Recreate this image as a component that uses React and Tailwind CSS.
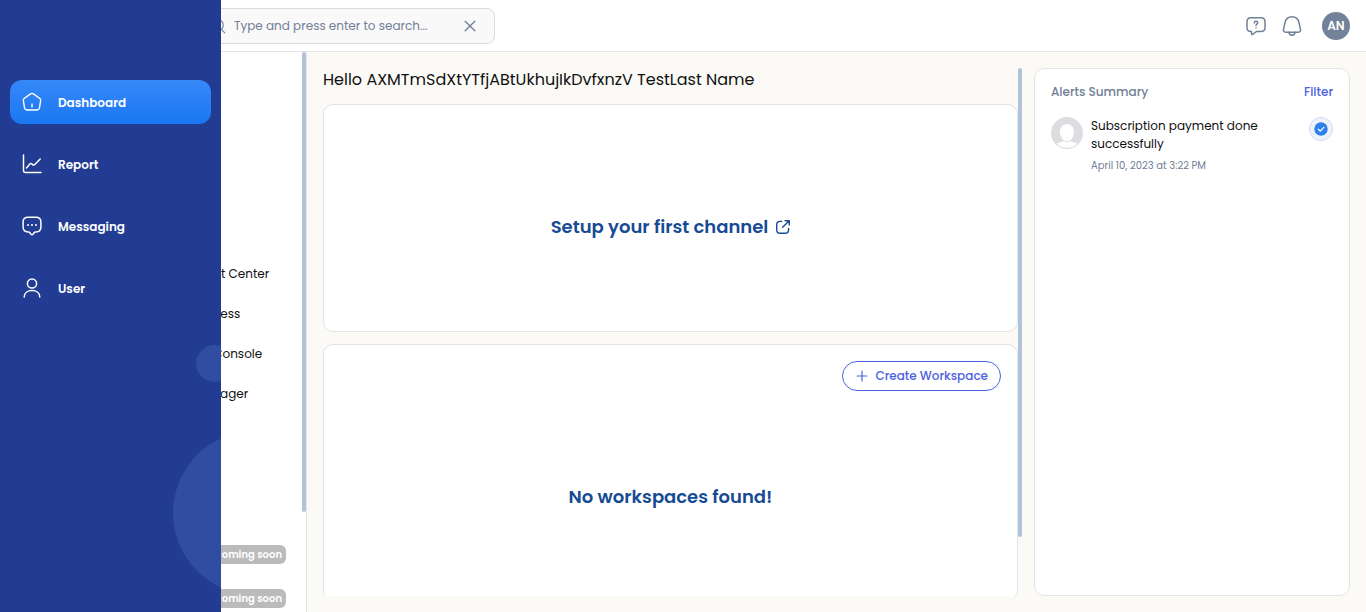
const NAV = [
  { label: "Dashboard", icon: HomeIcon, active: true },
  { label: "Report", icon: ReportIcon },
  { label: "Messaging", icon: MessageIcon },
  { label: "User", icon: UserIcon },
];

const LINKS = ["Merchant Center", "My Business", "Search Console", "Tag Manager"];

function Icon({ className, children, width = 1.5 }) {
  return (
    <svg
      viewBox="0 0 20 20"
      fill="none"
      stroke="currentColor"
      strokeWidth={width}
      strokeLinecap="round"
      strokeLinejoin="round"
      className={className}
      aria-hidden="true"
    >
      {children}
    </svg>
  );
}

function HomeIcon() {
  return (
    <Icon className="size-5 shrink-0" width={1.4}>
      <path d="M8.600 1.900 2.400 6.300C1.500 7 1.200 7.600 1.350 8.600L2.450 15.500C2.700 17.200 3.700 18 5.400 18H14.600C16.300 18 17.300 17.200 17.550 15.500L18.650 8.600C18.800 7.600 18.500 7 17.600 6.300L11.400 1.900C10.500 1.250 9.500 1.250 8.600 1.900Z" />
      <path d="M10 11.500v4" strokeLinecap="butt" />
    </Icon>
  );
}

function ReportIcon() {
  return (
    <Icon className="size-5 shrink-0">
      <path d="M1.500 1v15.500c0 1.400.800 2 2 2H19" />
      <path d="m4.500 14 3.300-3.900c.6-.7 1.500-.8 2.200-.1l.6.600c.7.700 1.600.6 2.200-.1L18.200 5" />
    </Icon>
  );
}

function MessageIcon() {
  return (
    <Icon className="size-5 shrink-0">
      <path d="M6 1.200h8c3.200 0 4.900 1.700 4.900 4.800v5c0 3.200-1.700 4.900-4.900 4.900h-.5c-.5 0-.9.200-1.200.6L11 18.200c-.6.700-1.400.7-2 0l-1.300-1.700c-.3-.4-.7-.6-1.200-.6H6c-3.200 0-4.900-1.700-4.900-4.900V6c0-3.100 1.700-4.800 4.900-4.800Z" />
      <path d="M6 9h.01M10 9h.01M14 9h.01" strokeWidth="2" />
    </Icon>
  );
}

function UserIcon() {
  return (
    <Icon className="size-5 shrink-0">
      <circle cx="10" cy="5.500" r="4.600" />
      <path d="M2.200 19c0-4 3.400-6.500 7.800-6.500s7.800 2.500 7.800 6.500" />
    </Icon>
  );
}

function Sidebar() {
  return (
    <aside className="absolute inset-y-0 left-0 z-10 w-[221px] overflow-hidden bg-[#223b93] px-2.5 pt-20">
      <span className="absolute top-[345px] left-[196px] size-[37px] rounded-full bg-[#314da2]" />
      <span className="absolute top-[431px] left-[173px] size-[164px] rounded-full bg-[#314da2]" />
      <nav className="relative flex flex-col gap-[18px]">
        {NAV.map(({ label, icon: Glyph, active }) => (
          <a
            key={label}
            href="#"
            className={
              active
                ? "flex h-11 items-center gap-4 rounded-xl bg-linear-to-b from-[#3688f8] to-[#1877f2] px-3 text-xs font-semibold text-white"
                : "flex h-11 items-center gap-4 rounded-xl px-3 text-xs font-semibold text-white"
            }
          >
            <Glyph />
            <span className="pt-0.5">{label}</span>
          </a>
        ))}
      </nav>
    </aside>
  );
}

function Header() {
  return (
    <header className="flex h-[52px] shrink-0 items-center justify-between border-b border-[#e2e4e6] bg-white pr-4 pl-[197px] text-[#718096]">
      <label className="flex h-9 w-[298px] items-center rounded-lg border border-[#d9dadb] bg-[#f9f9f9] pr-4 pl-3">
        <Icon className="size-4 shrink-0" width={1.4}>
          <circle cx="9" cy="9" r="7.500" />
          <path d="m14.500 14.500 4 4" />
        </Icon>
        <input
          type="text"
          aria-label="Search"
          placeholder="Type and press enter to search..."
          className="ml-2 min-w-0 flex-1 bg-transparent text-xs outline-none placeholder:text-[#718096]"
        />
        <button type="button" aria-label="Clear search" className="flex size-4 items-center justify-center">
          <Icon className="size-4" width={1.700}>
            <path d="m4 4 12 12M16 4 4 16" />
          </Icon>
        </button>
      </label>
      <div className="flex items-center gap-4">
        <button type="button" aria-label="Help">
          <Icon className="size-5">
            <path d="M5 1.800h10c2.500 0 4 1.500 4 4v5.700c0 2.500-1.500 4-4 4h-4.500L6.700 18.400c-.6.400-1.200.1-1.200-.6v-2.300H5c-2.500 0-4-1.500-4-4V5.800c0-2.500 1.500-4 4-4Z" />
            <path d="M8.300 7c0-1 .7-1.700 1.700-1.700s1.700.7 1.700 1.600c0 1.300-1.700 1.300-1.700 2.600M10 11.700v.1" />
          </Icon>
        </button>
        <button type="button" aria-label="Notifications">
          <Icon className="size-5">
            <path d="M10 .8C6 .8 3.600 3.300 2.900 7L1.500 13.300c-.4 1.700.4 2.900 2.100 2.900h12.800c1.700 0 2.500-1.200 2.100-2.900L17.100 7C16.400 3.300 14 .8 10 .8Z" />
            <path d="M6.800 16.200c.3 1.900 1.500 3 3.200 3s2.900-1.100 3.200-3" />
          </Icon>
        </button>
        <button type="button" className="ml-1 size-7 rounded-full bg-[#718299] text-xs font-semibold text-white">
          AN
        </button>
      </div>
    </header>
  );
}

function Menu() {
  return (
    <div className="flex w-[307px] shrink-0 border-r border-[#e2e4e6] bg-white">
      <div className="flex min-w-0 flex-1 flex-col pt-[202px] pr-4 pl-[168px] text-xs text-[#111]">
        {LINKS.map((label) => (
          <a key={label} href="#" className="flex h-10 shrink-0 items-center whitespace-nowrap">
            {label}
          </a>
        ))}
        <div className="mt-[131px] flex flex-col items-end gap-[25px] text-[10px] leading-[19px] font-semibold text-white">
          <span className="shrink-0 rounded-md bg-[#bbb] px-1">Coming soon</span>
          <span className="shrink-0 rounded-md bg-[#bbb] px-1">Coming soon</span>
        </div>
      </div>
      <div className="h-[460px] w-1 rounded-sm bg-[#b1c3d9]" />
    </div>
  );
}

function Alerts() {
  return (
    <section className="w-[316px] shrink-0 rounded-[10px] border border-[#e2e4e6] bg-white px-4 pt-3">
      <div className="flex items-center justify-between text-xs leading-[22px] font-medium">
        <h2 className="text-[#718096]">Alerts Summary</h2>
        <button type="button" className="text-[#4c63e0]">
          Filter
        </button>
      </div>
      <div className="mt-3.5 flex items-start gap-2">
        <svg viewBox="0 0 32 32" className="size-8 shrink-0" aria-hidden="true">
          <circle cx="16" cy="16" r="16" fill="#dcdde1" />
          <path
            d="M16 7c-4 0-7 3.300-7 8 0 3.800 1.600 7 4 8.500-.6 1-2.600 1.500-7.500 3.100A15 15 0 0 0 16 31a15 15 0 0 0 10.500-4.400c-4.900-1.600-6.900-2.100-7.500-3.100 2.400-1.500 4-4.700 4-8.500 0-4.700-3-8-7-8Z"
            fill="#fff"
          />
          <path d="M12.500 23.300c1.800 2 5.200 2 7 0" fill="none" stroke="#dcdde1" />
        </svg>
        <div className="min-w-0 flex-1">
          <p className="max-w-[190px] text-xs leading-[18px] text-[#111]">
            Subscription payment done successfully
          </p>
          <p className="mt-1 text-[10px] leading-[18px] text-[#718096]">April 10, 2023 at 3:22 PM</p>
        </div>
        <button
          type="button"
          aria-label="Mark as read"
          className="flex size-6 items-center justify-center rounded-full border border-[#d5d8f8] bg-[#eef3fb]"
        >
          <svg viewBox="0 0 14 14" className="size-3.5" aria-hidden="true">
            <circle cx="7" cy="7" r="6.700" fill="#2f80ed" />
            <path d="m4.300 7.200 1.900 1.900 3.600-3.700" fill="none" stroke="#fff" strokeWidth="1.300" strokeLinecap="round" strokeLinejoin="round" />
          </svg>
        </button>
      </div>
    </section>
  );
}

export default function App() {
  return (
    <div className="relative flex h-screen flex-col overflow-hidden bg-white font-['Poppins','Inter',sans-serif]">
      <Sidebar />
      <Header />
      <div className="flex min-h-0 flex-1">
        <Menu />
        <main className="flex min-w-0 flex-1 gap-3 bg-[#fbfaf6] p-4">
          <div className="flex min-w-0 flex-1 overflow-hidden">
            <div className="flex min-w-0 flex-1 flex-col gap-3">
              <h1 className="shrink-0 text-base leading-6 text-[#111]">
                Hello AXMTmSdXtYTfjABtUkhujIkDvfxnzV TestLast Name
              </h1>
              <section className="flex h-[228px] shrink-0 items-center justify-center rounded-[10px] border border-[#e2e4e6] bg-white pt-[18px]">
                <a href="#" className="flex items-center gap-2 text-lg font-semibold text-[#174a94]">
                  Setup your first channel
                  <Icon className="size-3.5" width={2}>
                    <path d="M8 2H6C3 2 1 4 1 7v7c0 3 2 5 5 5h7c3 0 5-2 5-5v-2" />
                    <path d="M13 1h6v6M18.500 1.500 9.500 10.500" />
                  </Icon>
                </a>
              </section>
              <section className="flex h-[256px] shrink-0 flex-col rounded-[10px] border border-[#e2e4e6] bg-white p-4">
                <button
                  type="button"
                  className="flex h-[30px] items-center gap-1.5 self-end rounded-full border border-[#4c63e0] px-3 text-xs font-medium text-[#4c63e0]"
                >
                  <Icon className="size-3.5" width={1.700}>
                    <path d="M10 3v14M3 10h14" />
                  </Icon>
                  Create Workspace
                </button>
                <p className="mt-[92px] text-center text-lg leading-7 font-semibold text-[#174a94]">
                  No workspaces found!
                </p>
              </section>
            </div>
            <div className="h-[469px] w-1 rounded-sm bg-[#b1c3d9]" />
          </div>
          <Alerts />
        </main>
      </div>
    </div>
  );
}
